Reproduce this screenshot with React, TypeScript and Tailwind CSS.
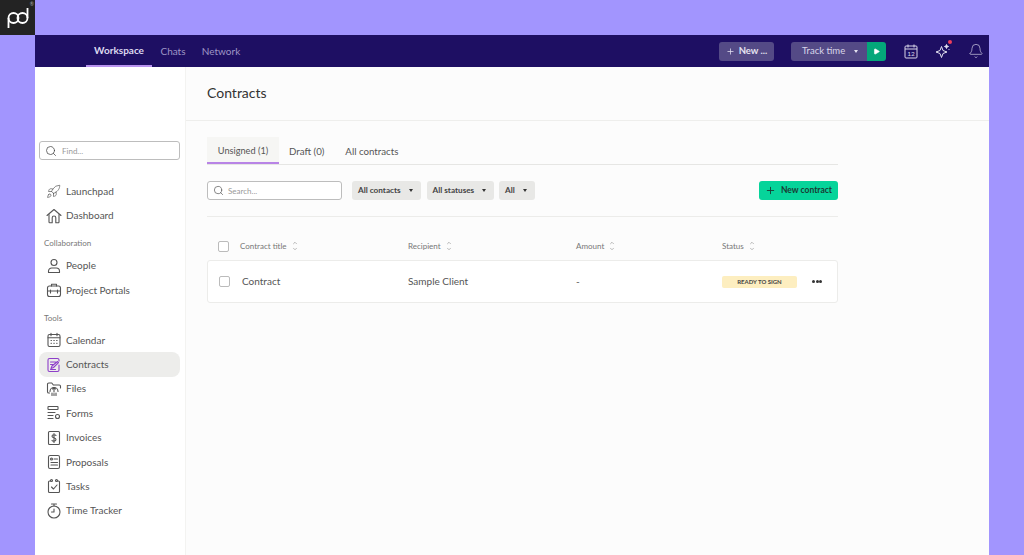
import React from 'react';
import { Bell, ChevronDown, ChevronUp, Play, Plus, Rocket, Search } from 'lucide-react';

function IconBox({ children }: { children: React.ReactNode }) {
  return (
    <svg width="16" height="16" viewBox="0 0 16 16" fill="none" stroke="currentColor" strokeWidth="1.100" strokeLinecap="round" strokeLinejoin="round">
      {children}
    </svg>
  );
}

const HomeIcon = () => (
  <IconBox>
    <path d="M1 7.500 8 1.500l7 6" />
    <path d="M3 6.500V14a.8.8 0 0 0 .8.8H6.200V9.800a1.800 1.800 0 0 1 3.600 0v5h2.400A.8.8 0 0 0 13 14V6.500" />
  </IconBox>
);
const PersonIcon = () => (
  <IconBox>
    <circle cx="8" cy="4.500" r="3" />
    <path d="M2.500 14.500v-1.300A3.200 3.200 0 0 1 5.700 10h4.600a3.200 3.200 0 0 1 3.200 3.200v1.300z" />
  </IconBox>
);
const PortalIcon = () => (
  <IconBox>
    <rect x="1.500" y="4" width="13" height="10.500" rx="2" />
    <path d="M5.500 4V2.200h5V4M1.500 9h13M4.500 8v3M11.500 8v3" />
  </IconBox>
);
const CalendarIcon = () => (
  <IconBox>
    <rect x="2" y="2.500" width="12" height="12" rx="1.500" />
    <path d="M2 5.800h12M5 1.200v2.500M11 1.200v2.500M5 8.500h.5M7.800 8.500h.5M10.600 8.500h.5M5 11.200h.5M7.800 11.200h.5M10.600 11.200h.5" />
  </IconBox>
);
const ContractIcon = () => (
  <IconBox>
    <path d="M13 8v5a1.500 1.500 0 0 1-1.500 1.500h-8A1.500 1.500 0 0 1 2 13V3a1.500 1.500 0 0 1 1.500-1.500h8A1.500 1.500 0 0 1 13 3v1" />
    <path d="M4.500 5h5M4.500 7.500h3M5 11.500l1-2.500 5.500-4.500 1 1.200-5 4.800zM4.500 12.500h5" />
  </IconBox>
);
const FilesIcon = () => (
  <IconBox>
    <path d="M3.500 12H2.800A1.300 1.300 0 0 1 1.500 10.700V3.300A1.300 1.300 0 0 1 2.800 2h3l1.500 2h6A1.300 1.300 0 0 1 14.500 5.300V7" />
    <path d="M4 10.500a4 4 0 0 1 8 0" />
    <path d="M8 11V6.500M6.500 8 8 6.500 9.500 8M6 14.500v-2.500M8 14.500v-2M10 14.500v-2.500" />
  </IconBox>
);
const FormsIcon = () => (
  <IconBox>
    <rect x="2" y="1.500" width="10" height="3" rx=".5" />
    <path d="M2 7.500h7M2 10.500h5M2 13.500h5" />
    <circle cx="11.500" cy="11.500" r="2" />
  </IconBox>
);
const InvoiceIcon = () => (
  <IconBox>
    <rect x="2.500" y="1.500" width="11" height="13" rx="1" />
    <path d="M10 5.500C9.500 4.500 6 4.300 6 6.200c0 2 4 1.300 4 3.400 0 2-3.500 1.800-4 .8M8 3.500v9" />
  </IconBox>
);
const ProposalIcon = () => (
  <IconBox>
    <rect x="2.500" y="1.500" width="11" height="13" rx="1.500" />
    <circle cx="5.500" cy="5" r="1" />
    <path d="M8 5h3.500M5 8.500h6.500M5 11h6.500" />
  </IconBox>
);
const TasksIcon = () => (
  <IconBox>
    <path d="M4.500 3H3.500A1 1 0 0 0 2.500 4v9.500a1 1 0 0 0 1 1h9a1 1 0 0 0 1-1V4a1 1 0 0 0-1-1h-1" />
    <circle cx="5.500" cy="2.500" r="1" />
    <circle cx="10.500" cy="2.500" r="1" />
    <path d="M5.500 9l2 2 3.500-4" />
  </IconBox>
);
const TimerIcon = () => (
  <IconBox>
    <circle cx="8" cy="9" r="6" />
    <path d="M5.500 1h5M8 1v2M8 6v3H5.500" />
  </IconBox>
);
const CalendarDay = () => (
  <svg width="14" height="15" viewBox="0 0 14 15" fill="none" stroke="currentColor" strokeWidth="1">
    <rect x="1" y="2" width="12" height="12" rx="1" />
    <path d="M1 5h12M4 .5v3M10 .5v3" />
    <text x="7" y="12.200" textAnchor="middle" fontSize="6.500" fill="currentColor" stroke="none">12</text>
  </svg>
);
const SparkleIcon = () => (
  <svg width="16" height="16" viewBox="0 0 16 16" fill="none" stroke="currentColor" strokeWidth="1" strokeLinejoin="round">
    <path d="M6.500 3.500 8 7.500l4 1.500-4 1.500-1.500 4-1.500-4-4-1.500 4-1.500z" />
    <path d="M11.500 1.500l.5 1.500 1.500.5-1.500.5-.5 1.500-.5-1.500-1.500-.5 1.500-.5z" fill="currentColor" />
    <circle cx="14" cy="6.500" r=".6" fill="currentColor" stroke="none" />
  </svg>
);

function NavItem({ icon, label, active }: { icon: React.ReactNode; label: string; active?: boolean }) {
  return (
    <div className={`flex h-[24.400px] items-center ${active ? 'rounded-lg bg-[#ededeb]' : ''}`}>
      <div className={`flex w-[27px] justify-center pl-[2px] ${active ? 'text-[#8d3fc9]' : 'text-[#555]'}`}>{icon}</div>
      <span className="text-[10px] text-[#555]">{label}</span>
    </div>
  );
}

function SectionLabel({ children }: { children: React.ReactNode }) {
  return <div className="flex h-[25.700px] items-center pl-[5px] pt-[5px] text-[8px] text-[#777]">{children}</div>;
}

function SortArrows() {
  return (
    <span className="flex flex-col text-[#777]">
      <ChevronUp size={6} strokeWidth={2} />
      <ChevronDown size={6} strokeWidth={2} />
    </span>
  );
}

function Filter({ label, width }: { label: string; width: string }) {
  return (
    <div className={`flex h-[19px] items-center justify-between rounded-[3px] bg-[#e8e8e6] pl-[6px] pr-[8px] text-[8.200px] font-bold text-[#444] ${width}`}>
      {label}
      <span className="border-x-[2.500px] border-t-[3px] border-x-transparent border-t-[#333]" />
    </div>
  );
}

function Check() {
  return <span className="block h-[11px] w-[11px] rounded-[2px] border border-[#bbb] bg-white" />;
}

export default function App() {
  return (
    <div className="relative h-[555px] overflow-hidden bg-[#a295fe] px-[35px] pt-[35px] font-['Lato',sans-serif]">
      <div className="absolute left-0 top-0 flex h-[35px] w-[35px] items-center justify-center bg-[#232323]">
        <svg width="22" height="22" viewBox="0 0 22 22" fill="none" stroke="#fff" strokeWidth="1.800">
          <circle cx="6.500" cy="11" r="5" />
          <circle cx="15.500" cy="11" r="5" />
          <path d="M1.500 11v10M20.500 11V1" />
        </svg>
        <span className="absolute right-[1px] top-[0px] text-[5px] leading-[8px] text-[#aaa]">®</span>
      </div>

      <div className="flex h-[32px] items-center bg-[#1e0f63] pr-[5px]">
        <div className="flex h-full pl-[51px] text-[10px]">
          <div className="flex w-[66px] items-center justify-center border-b-2 border-[#b892ee] font-bold text-[#dcd8ef]">Workspace</div>
          <div className="flex w-[42px] items-center justify-center text-[#9e96c6]">Chats</div>
          <div className="flex w-[54px] items-center justify-center text-[#9e96c6]">Network</div>
        </div>
        <div className="ml-auto flex items-center">
          <div className="flex h-[19px] w-[55px] items-center justify-center gap-[4px] rounded-[3px] bg-[#544a86] text-[9.500px] font-bold text-[#e4e2f0]">
            <Plus size={9} />New ...
          </div>
          <div className="ml-[17px] flex h-[19px] w-[76px] items-center rounded-l-[3px] bg-[#544a86] pl-[11px] text-[9.500px] text-[#d9d6ea]">
            Track time
            <span className="ml-[9px] border-x-[2.500px] border-t-[3px] border-x-transparent border-t-[#e4e2f0]" />
          </div>
          <div className="flex h-[19px] w-[19px] items-center justify-center rounded-r-[3px] bg-[#04a77a]">
            <Play size={7} fill="#fff" stroke="#fff" />
          </div>
          <div className="ml-[18px] text-[#d9d6ea]"><CalendarDay /></div>
          <div className="relative ml-[17px] text-[#e4e2f0]">
            <SparkleIcon />
            <span className="absolute right-[-1px] top-[-3px] h-[4px] w-[4px] rounded-full bg-[#ef3e5c]" />
          </div>
          <div className="ml-[17px] text-[#d9d6ea]"><Bell size={16} strokeWidth={1} /></div>
        </div>
      </div>

      <div className="flex h-[488px] bg-[#fcfcfc]">
        <aside className="w-[151px] shrink-0 border-r border-[#f3f3f1] bg-white pl-[4px] pr-[5px] pt-[74px]">
          <div className="flex h-[19px] items-center rounded-[3px] border border-[#bdbdbd] pl-[5px] text-[8px] text-[#999]">
            <Search size={12} strokeWidth={1.5} className="mr-[5px] text-[#444]" />Find...
          </div>
          <div className="mt-[19px]">
            <NavItem icon={<Rocket size={15} strokeWidth={1.1} />} label="Launchpad" />
            <NavItem icon={<HomeIcon />} label="Dashboard" />
            <SectionLabel>Collaboration</SectionLabel>
            <NavItem icon={<PersonIcon />} label="People" />
            <NavItem icon={<PortalIcon />} label="Project Portals" />
            <SectionLabel>Tools</SectionLabel>
            <NavItem icon={<CalendarIcon />} label="Calendar" />
            <NavItem icon={<ContractIcon />} label="Contracts" active />
            <NavItem icon={<FilesIcon />} label="Files" />
            <NavItem icon={<FormsIcon />} label="Forms" />
            <NavItem icon={<InvoiceIcon />} label="Invoices" />
            <NavItem icon={<ProposalIcon />} label="Proposals" />
            <NavItem icon={<TasksIcon />} label="Tasks" />
            <NavItem icon={<TimerIcon />} label="Time Tracker" />
          </div>
        </aside>

        <main className="min-w-0 flex-1">
          <div className="flex h-[54px] items-center border-b border-[#eeeeec] pb-[2px] pl-[21px] text-[14px] text-[#333]">Contracts</div>
          <div className="w-[652px] pl-[21px] pt-[16px]">
            <div className="flex h-[28px] items-stretch border-b border-[#e6e6e4] text-[9.700px] text-[#555]">
              <div className="flex w-[72px] items-center justify-center border-b-2 border-[#b884e6] bg-[#f6f6f4] pt-[2px] text-[9.200px]">Unsigned (1)</div>
              <div className="flex items-center pl-[10px] pt-[1px]">Draft (0)</div>
              <div className="flex items-center pl-[21px] pt-[1px]">All contracts</div>
            </div>
            <div className="mt-[16px] flex items-center">
              <div className="flex h-[19px] w-[135px] items-center rounded-[3px] border border-[#bdbdbd] bg-white pl-[5px] text-[8px] text-[#999]">
                <Search size={11} strokeWidth={1.5} className="mr-[4px] text-[#555]" />Search...
              </div>
              <div className="ml-[10px] flex gap-[5.500px]">
                <Filter label="All contacts" width="w-[69px]" />
                <Filter label="All statuses" width="w-[67px]" />
                <Filter label="All" width="w-[36px]" />
              </div>
              <div className="ml-auto flex h-[19px] w-[79px] items-center justify-center gap-[5px] rounded-[3px] bg-[#06d49a] text-[8.500px] font-bold text-[#1a3b34]">
                <Plus size={11} />New contract
              </div>
            </div>
            <div className="mt-[16px] border-t border-[#ececea]" />
            <div className="flex h-[43px] items-center pt-[15px] text-[8px] text-[#777]">
              <div className="flex w-[201px] items-center pl-[11px]">
                <Check />
                <span className="ml-[11px] mr-[5px]">Contract title</span>
                <SortArrows />
              </div>
              <div className="flex w-[168px] items-center gap-[5px]">Recipient<SortArrows /></div>
              <div className="flex w-[146px] items-center gap-[5px]">Amount<SortArrows /></div>
              <div className="flex items-center gap-[5px]">Status<SortArrows /></div>
            </div>
            <div className="flex h-[43px] items-center rounded-[3px] border border-[#ececea] bg-white text-[10px] text-[#555]">
              <div className="flex w-[200px] items-center pl-[11px]">
                <Check />
                <span className="ml-[12px]">Contract</span>
              </div>
              <div className="w-[168px]">Sample Client</div>
              <div className="w-[146px]">-</div>
              <div className="flex h-[12px] w-[75px] items-center justify-center rounded-[2px] bg-[#fdeec0] text-[6px] font-bold text-[#444]">READY TO SIGN</div>
              <div className="ml-[15px] flex gap-[0.500px]">
                <span className="h-[3px] w-[3px] rounded-full bg-[#333]" />
                <span className="h-[3px] w-[3px] rounded-full bg-[#333]" />
                <span className="h-[3px] w-[3px] rounded-full bg-[#333]" />
              </div>
            </div>
          </div>
        </main>
      </div>
    </div>
  );
}
